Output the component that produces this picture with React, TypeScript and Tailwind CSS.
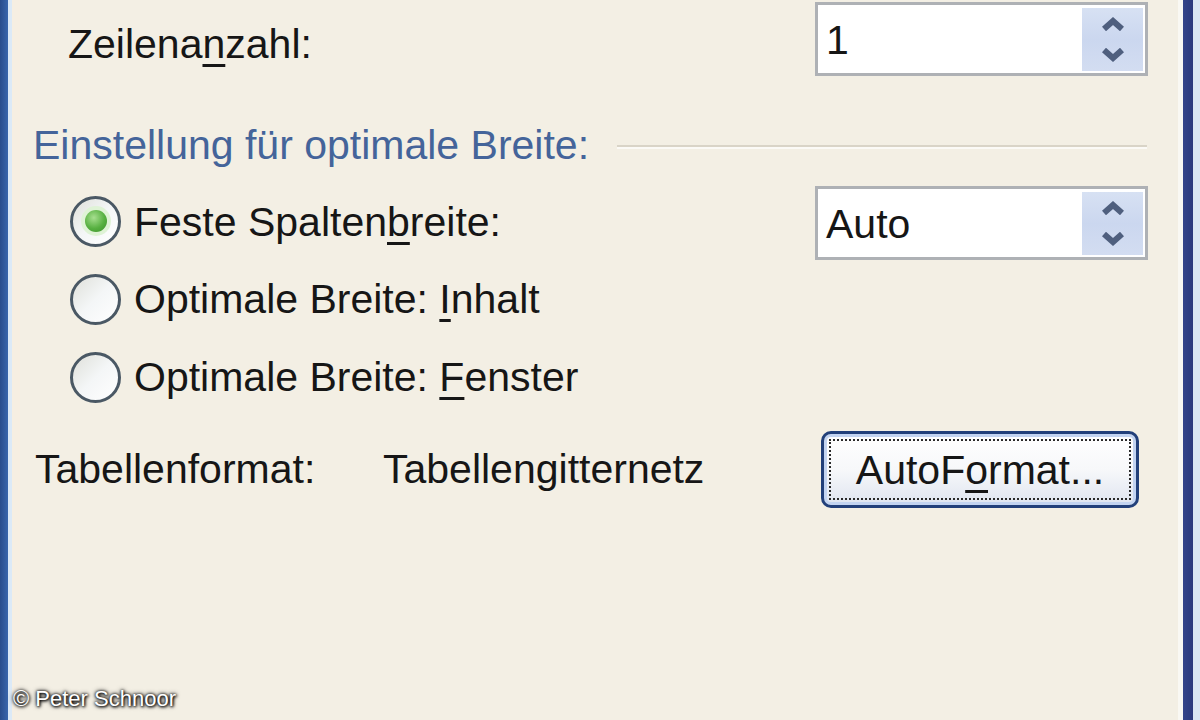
import React from "react";

const U = ({ children }: { children: React.ReactNode }) => (
  <span className="underline decoration-[3px] underline-offset-[6px]">{children}</span>
);

const Arrow = ({ up }: { up?: boolean }) => (
  <svg width="24" height="14" viewBox="0 0 24 14">
    <polyline
      points={up ? "3,12 12,4 21,12" : "3,2 12,10 21,2"}
      fill="none"
      stroke="#4f5f7e"
      strokeWidth="6"
      strokeLinejoin="miter"
    />
  </svg>
);

const Spin = ({ value }: { value: string }) => (
  <div className="flex h-[74px] w-[333px] items-center border-[3px] border-[#aeb1b5] bg-white">
    <span className="flex-1 pl-[8px] pt-[2px]">{value}</span>
    <div className="mr-[2px] flex h-[63px] w-[61px] flex-col items-center justify-center gap-[17px] bg-gradient-to-b from-[#d7e1f3] via-[#cbd7ef] to-[#d3ddf1]">
      <Arrow up />
      <Arrow />
    </div>
  </div>
);

const Radio = ({ checked }: { checked?: boolean }) => (
  <div className="flex h-[51px] w-[51px] shrink-0 items-center justify-center rounded-full border-[3px] border-[#4a5864] bg-gradient-to-br from-[#dfe0da] via-[#f4f6f7] to-[#ffffff]">
    {checked && (
      <div className="flex h-[30px] w-[30px] items-center justify-center rounded-full bg-[#dff3d6]">
        <div className="h-[22px] w-[22px] rounded-full bg-[radial-gradient(circle_at_40%_35%,#a7df8f,#57b041_55%,#3a8f2a)]" />
      </div>
    )}
  </div>
);

export default function App() {
  return (
    <div
      className="relative flex h-[720px] w-[1200px] overflow-hidden bg-[#f3efe4] text-[41px] leading-none text-[#161616]"
      style={{ fontFamily: '"Liberation Sans", Arial, sans-serif' }}
    >
      <div className="w-[8px] bg-gradient-to-r from-[#2a4d8c] to-[#3a66ac]" />
      <div className="w-[4px] bg-[#dce9f7]" />
      <div className="w-[8px] bg-[#f6eee2]" />

      <div className="flex flex-1 flex-col">
        {/* Zeilenanzahl */}
        <div className="flex h-[78px] items-center pl-[48px] pr-[30px]">
          <span className="pt-[10px]">
            Zeilena<U>n</U>zahl:
          </span>
          <div className="ml-auto">
            <Spin value="1" />
          </div>
        </div>

        {/* Heading */}
        <div className="flex h-[104px] items-start pl-[13px] pr-[31px] pt-[47px]">
          <span className="text-[#44649a]">Einstellung für optimale Breite:</span>
          <div className="ml-[28px] mt-[20px] flex-1 border-t-[2px] border-b-[2px] border-t-[#d9d4c7] border-b-[#fbfaf6]" />
        </div>

        {/* Radio 1 + spin */}
        <div className="flex h-[78px] items-center pl-[50px] pr-[30px]">
          <Radio checked />
          <span className="ml-[13px] pt-[2px]">
            Feste Spalten<U>b</U>reite:
          </span>
          <div className="ml-auto -mb-[2px] self-start pt-[4px]">
            <Spin value="Auto" />
          </div>
        </div>

        {/* Radio 2 */}
        <div className="flex h-[78px] items-center pl-[50px]">
          <Radio />
          <span className="ml-[13px] pt-[1px]">
            Optimale Breite: <U>I</U>nhalt
          </span>
        </div>

        {/* Radio 3 */}
        <div className="flex h-[78px] items-center pl-[50px]">
          <Radio />
          <span className="ml-[13px] pt-[1px]">
            Optimale Breite: <U>F</U>enster
          </span>
        </div>

        {/* Tabellenformat */}
        <div className="flex items-center pl-[15px] pr-[39px] pt-[15px]">
          <span className="w-[348px]">Tabellenformat:</span>
          <span>Tabellengitternetz</span>
          <div className="ml-auto flex h-[77px] w-[318px] rounded-[10px] border-[3px] border-[#22407a] bg-gradient-to-b from-[#ffffff] via-[#f7f8fa] to-[#dfe5f0] p-[5px] shadow-[inset_0_0_0_3px_#c3d4f1]">
            <div className="flex flex-1 items-center justify-center border-[2px] border-dotted border-[#2a2a2a] pt-[2px]">
              AutoF<U>o</U>rmat...
            </div>
          </div>
        </div>
      </div>

      <div className="w-[5px] bg-[#f9f8f3]" />
      <div className="w-[10px] bg-gradient-to-r from-[#34458a] to-[#2b3a7c]" />
      <div className="w-[7px] bg-[#dae7f3]" />

      <div
        className="absolute left-[13px] top-[688px] text-[22px] leading-none text-white [text-shadow:0_0_3px_#000,1px_1px_3px_#000,0_0_5px_#333]"
        style={{ fontFamily: '"Liberation Sans", Arial, sans-serif' }}
      >
        © Peter Schnoor
      </div>
    </div>
  );
}
